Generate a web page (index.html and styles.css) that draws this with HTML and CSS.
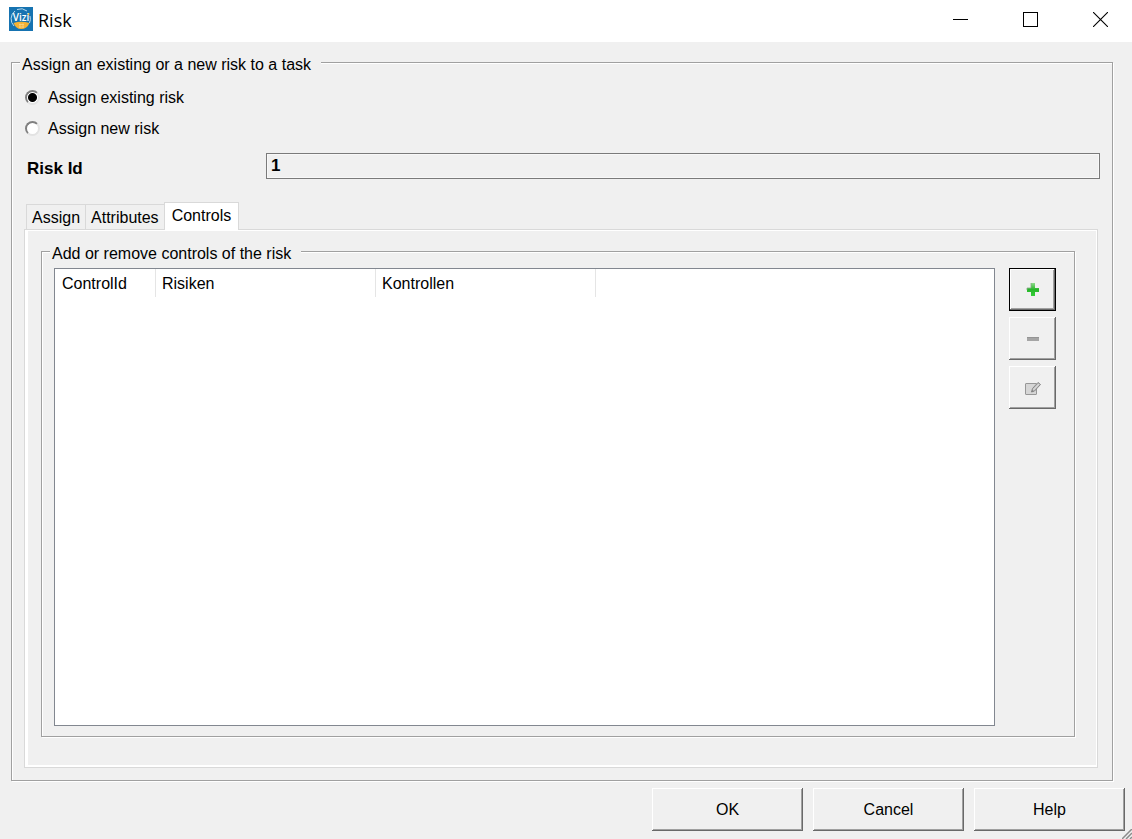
FILE: index.html
```
<!DOCTYPE html>
<html lang="en">
<head>
    <meta charset="UTF-8">
    <meta name="viewport" content="width=device-width, initial-scale=1.0">
    <title>Risk</title>
    <link rel="stylesheet" href="styles.css">
</head>
<body>

    <!-- Title bar -->
    <header class="titlebar">
        <svg class="logo" width="24" height="24" viewBox="0 0 24 24">
            <rect width="24" height="24" fill="#1673b1"/>
            <path d="M4.5 16 Q12 13.5 20.5 16 Q18 22 12 22 Q7 22 4.5 16Z" fill="#f6b234"/>
            <path d="M5 19 A10 10 0 0 1 6 4 M8 2.5 A10 10 0 0 1 18 4 M21 9 A10 10 0 0 1 20.5 16" fill="none" stroke="#b9d9ec" stroke-width="1"/>
            <path d="M10 17.500h5M10 20h5M11 16.500v4.500M14 16.500v4.500" stroke="#fbd48a" stroke-width="0.800"/>
            <circle cx="19.500" cy="7" r="1" fill="#f6b234"/>
            <text x="12" y="13.500" text-anchor="middle" class="logo-text">Vizi</text>
        </svg>
        <h1>Risk</h1>
        <div class="window-buttons">
            <button type="button" aria-label="Minimize">
                <svg width="15" height="15" viewBox="0 0 15 15"><path d="M0 7.500h15" stroke="#000"/></svg>
            </button>
            <button type="button" aria-label="Maximize">
                <svg width="15" height="15" viewBox="0 0 15 15"><rect x="0.500" y="0.500" width="14" height="14" fill="none" stroke="#000"/></svg>
            </button>
            <button type="button" aria-label="Close">
                <svg width="15" height="15" viewBox="0 0 15 15"><path d="M0 0L15 15M15 0L0 15" stroke="#000" stroke-width="1.100"/></svg>
            </button>
        </div>
    </header>

    <form class="dialog">
        <fieldset class="group">
            <legend>Assign an existing or a new risk to a task</legend>

            <label class="radio-row"><input type="radio" name="mode" checked>Assign existing risk</label>
            <label class="radio-row"><input type="radio" name="mode">Assign new risk</label>

            <div class="id-row">
                <label for="riskId">Risk Id</label>
                <input type="text" id="riskId" value="1" readonly>
            </div>

            <div class="tabs" role="tablist">
                <button type="button" role="tab" class="tab">Assign</button>
                <button type="button" role="tab" class="tab">Attributes</button>
                <button type="button" role="tab" class="tab active" aria-selected="true">Controls</button>
            </div>

            <div class="pane" role="tabpanel">
                <fieldset class="group controls">
                    <legend>Add or remove controls of the risk</legend>
                    <div class="controls-row">
                        <div class="list">
                            <table>
                                <thead>
                                    <tr>
                                        <th class="col-id">ControlId</th>
                                        <th class="col">Risiken</th>
                                        <th class="col">Kontrollen</th>
                                    </tr>
                                </thead>
                            </table>
                        </div>

                        <div class="tools">
                            <button type="button" class="btn tool default" aria-label="Add">
                                <svg width="16" height="16" viewBox="0 0 16 16">
                                    <defs>
                                        <linearGradient id="plusFill" x1="0" y1="0" x2="0" y2="1">
                                            <stop offset="0" stop-color="#8fdc8c"/>
                                            <stop offset="0.500" stop-color="#27b52a"/>
                                            <stop offset="1" stop-color="#35cf38"/>
                                        </linearGradient>
                                    </defs>
                                    <path d="M6 1h4v5h4v4h-4v4H6v-4H2V6h4z" fill="url(#plusFill)"/>
                                    <path d="M6 1v5H2v2" fill="none" stroke="#84a884" stroke-width="0.800"/>
                                </svg>
                            </button>
                            <button type="button" class="btn tool" aria-label="Remove">
                                <svg width="16" height="16" viewBox="0 0 16 16">
                                    <path d="M2 6h12v4H2z" fill="#a5a5a5"/>
                                    <path d="M2 6.500h12" stroke="#949494"/>
                                </svg>
                            </button>
                            <button type="button" class="btn tool" aria-label="Edit">
                                <svg width="16" height="16" viewBox="0 0 16 16">
                                    <rect x="0.500" y="3.500" width="11" height="11" rx="0.500" fill="#d6d6d6" stroke="#979797"/>
                                    <path d="M6.500 12L7.500 8.500L13 2.500L15.500 4.500L9.500 11Z" fill="#c4c4c4" stroke="#858585"/>
                                    <path d="M8.500 10L14 4" stroke="#dedede"/>
                                    <path d="M6.500 12l1-2 1 1z" fill="#777"/>
                                </svg>
                            </button>
                        </div>
                    </div>
                </fieldset>
            </div>
        </fieldset>

        <div class="footer">
            <button type="button" class="btn">OK</button>
            <button type="button" class="btn">Cancel</button>
            <button type="button" class="btn">Help</button>
        </div>
    </form>

    <!-- Resize grip -->
    <svg class="grip" width="10" height="10" viewBox="0 0 10 10">
        <path d="M0 10L10 0M4 10L10 4M8 10L10 8" stroke="#8c8c8c" stroke-width="1.500"/>
    </svg>

</body>
</html>
```
FILE: styles.css
```
/* General Reset */
* {
    margin: 0;
    padding: 0;
    box-sizing: border-box;
}

body {
    background-color: #f0f0f0;
    display: flex;
    flex-direction: column;
    min-height: 100vh;
    color: #000000;
    font-family: "Liberation Sans", Arial, sans-serif;
    font-size: 16px;
    line-height: 19px;
}

button, input {
    font: inherit;
    color: inherit;
}

/* Title bar */
.titlebar {
    display: flex;
    align-items: center;
    height: 42px;
    padding: 0 24px 4px 9px;
    background-color: #ffffff;
}

.logo-text {
    font: 600 10px "Open Sans", sans-serif;
    fill: #ffffff;
}

h1 {
    flex: 1;
    margin-left: 5px;
    padding-top: 1px;
    font: 18px "Open Sans", sans-serif;
}

.window-buttons {
    display: flex;
    gap: 55px;
}

.window-buttons button {
    display: flex;
    width: 15px;
    border: none;
    background: none;
}

/* Group boxes */
.dialog {
    flex: 1;
    display: flex;
    flex-direction: column;
    padding: 9px 7px 8px 11px;
}

.group {
    flex: 1;
    display: flex;
    flex-direction: column;
    min-width: 0;
    margin-right: 12px;
    padding: 8px 12px 12px 8px;
    border: 1px solid #a0a0a0;
    box-shadow: 1px 1px 0 #ffffff, inset 1px 1px 0 #ffffff;
}

legend {
    padding: 4px 10px 0 2px;
    background-color: #f0f0f0;
}

/* Radio buttons */
.radio-row {
    display: flex;
    align-items: center;
    gap: 8px;
    height: 31px;
    padding-left: 5px;
}

.radio-row input {
    appearance: none;
    width: 15px;
    height: 15px;
    border: 2px solid;
    border-color: #808080 #e3e3e3 #e3e3e3 #808080;
    border-radius: 50%;
    background-color: #ffffff;
}

.radio-row input:checked {
    background-image: radial-gradient(circle, #000000 4px, #ffffff 5px);
}

/* Risk id */
.id-row {
    display: flex;
    align-items: center;
    margin-top: 9px;
    padding-left: 7px;
    font-size: 17px;
    font-weight: bold;
}

.id-row label {
    width: 239px;
    padding-top: 4px;
}

.id-row input {
    flex: 1;
    height: 26px;
    padding: 0 4px;
    border: 1px solid #7a7a7a;
    background-color: #f0f0f0;
    box-shadow: inset 0 0 0 1px #f8f8f8;
    outline: none;
}

/* Tabs */
.tabs {
    display: flex;
    align-items: flex-end;
    margin-top: 23px;
    padding-left: 6px;
}

.tab {
    height: 25px;
    padding: 0 5px;
    border: 1px solid #d9d9d9;
    border-width: 1px 0 0 1px;
    background-color: #f0f0f0;
}

.tab.active {
    position: relative;
    height: 28px;
    margin-bottom: -1px;
    padding: 0 7px 2px;
    border-width: 1px 1px 0;
    background-color: #ffffff;
}

.pane {
    flex: 1;
    display: flex;
    margin: 0 2px 0 4px;
    padding: 10px 22px 30px 16px;
    border: 1px solid #d9d9d9;
    box-shadow: inset 3px 1px 0 #ffffff, inset -1px -2px 0 #ffffff;
}

/* Controls list */
.controls {
    margin-right: 0;
    padding: 5px 18px 10px 12px;
}

.controls legend {
    margin-left: -4px;
}

.controls-row {
    flex: 1;
    display: flex;
    gap: 14px;
}

.list {
    flex: 1;
    min-height: 458px;
    border: 1px solid #828790;
    background-color: #ffffff;
}

table {
    border-spacing: 0;
    table-layout: fixed;
    width: 541px;
}

th {
    height: 28px;
    padding: 0 6px;
    border-right: 1px solid #e5e5e5;
    font-weight: normal;
    text-align: left;
}

.col-id {
    width: 101px;
    padding-left: 7px;
}

.col {
    width: 220px;
}

/* Buttons */
.btn {
    width: 151px;
    height: 43px;
    border: none;
    background-color: #f0f0f0;
    box-shadow: inset -1px -1px 0 #696969, inset 1px 1px 0 #ffffff, inset -2px -2px 0 #a0a0a0;
}

.tools {
    display: flex;
    flex-direction: column;
    gap: 6px;
}

.tool {
    display: flex;
    align-items: center;
    justify-content: center;
    width: 47px;
}

.default {
    border: 1px solid #000000;
}

.footer {
    display: flex;
    justify-content: flex-end;
    gap: 10px;
    padding-top: 7px;
}

.grip {
    position: absolute;
    right: 0;
    bottom: 0;
}
```
